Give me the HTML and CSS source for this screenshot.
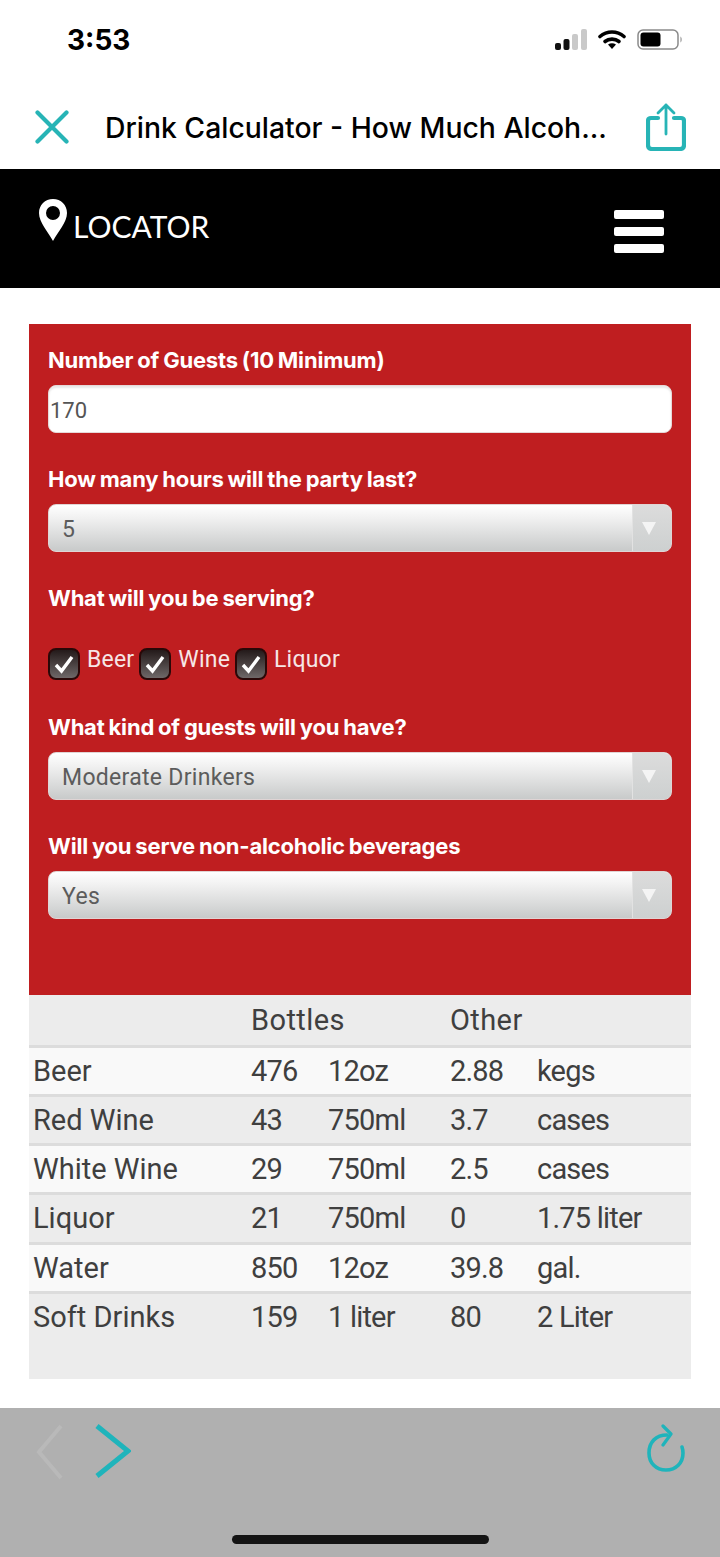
FILE: index.html
```html
<!DOCTYPE html>
<html lang="en">

<head>
    <meta charset="UTF-8">
    <meta name="viewport" content="width=device-width, initial-scale=1.0">
    <title>Drink Calculator</title>
    <link rel="stylesheet" href="styles.css">
</head>

<body>
    <div class="status-bar">
        <span class="time">3:53</span>
        <div class="status-icons">
            <svg class="signal" width="32" height="21" viewBox="0 0 32 21">
                <rect x="0" y="14" width="6" height="7" rx="2" fill="#111" />
                <rect x="8.500" y="10" width="6" height="11" rx="2" fill="#111" />
                <rect x="17" y="5" width="6" height="16" rx="2" fill="#c9c9c9" />
                <rect x="26" y="0" width="6" height="21" rx="2" fill="#c9c9c9" />
            </svg>
            <svg class="wifi" width="28" height="20" viewBox="0 0 28 20">
                <path d="M2 7.500 C9 1.500 19 1.500 26 7.500" fill="none" stroke="#000" stroke-width="3.600" stroke-linecap="round" />
                <path d="M7 12.500 C11 9.300 17 9.300 21 12.500" fill="none" stroke="#000" stroke-width="3.600" stroke-linecap="round" />
                <path d="M10 15.500 L14 20 L18 15.500 C15.500 13.800 12.500 13.800 10 15.500 Z" fill="#000" />
            </svg>
            <svg class="battery" width="45" height="21" viewBox="0 0 45 21">
                <rect x="1" y="1" width="40" height="19" rx="5" fill="#fff" stroke="#8a8a8a" stroke-width="1.500" />
                <rect x="3.500" y="3.500" width="20" height="14" rx="3" fill="#000" />
                <path d="M43.500 7.500 C45 8.500 45 12.500 43.500 13.500 Z" fill="#8a8a8a" />
            </svg>
        </div>
    </div>

    <div class="nav-bar">
        <svg class="close-icon" width="34" height="34" viewBox="0 0 34 34">
            <path d="M2.500 2.500 L31.500 31.500 M31.500 2.500 L2.500 31.500" fill="none" stroke="#27b4b6" stroke-width="4.200" stroke-linecap="round" />
        </svg>
        <span class="page-title">Drink Calculator - How Much Alcoh...</span>
        <svg class="share-icon" width="40" height="48" viewBox="0 0 40 48">
            <path d="M12 15 H5 Q2 15 2 18 V42 Q2 46 6 46 H34 Q38 46 38 42 V18 Q38 15 35 15 H28" fill="none" stroke="#27b4b6" stroke-width="4.200" stroke-linecap="round" />
            <path d="M20 31 V2 M12 10 L20 2 L28 10" fill="none" stroke="#27b4b6" stroke-width="2.800" stroke-linecap="round" stroke-linejoin="round" />
        </svg>
    </div>

    <header class="site-header">
        <div class="locator">
            <svg class="pin" width="28" height="42" viewBox="0 0 28 42">
                <path fill-rule="evenodd" d="M14 0 C6 0 0 6 0 14 C0 23 9 33 14 42 C19 33 28 23 28 14 C28 6 22 0 14 0 Z M14 7 A7 7 0 1 1 14 21 A7 7 0 1 1 14 7 Z" fill="#fff" />
            </svg>
            <span class="locator-text">LOCATOR</span>
        </div>
        <div class="hamburger">
            <span></span>
            <span></span>
            <span></span>
        </div>
    </header>

    <main class="content">
        <form class="calc-form">
            <label class="field-label">Number of Guests (10 Minimum)</label>
            <input class="text-input" type="text" value="170">

            <label class="field-label">How many hours will the party last?</label>
            <div class="select-wrap">
                <select class="select-input">
                    <option>5</option>
                </select>
                <span class="select-arrow"></span>
            </div>

            <label class="field-label">What will you be serving?</label>
            <div class="checks">
                <span class="check"><svg width="22" height="22" viewBox="0 0 22 22"><path d="M3 12 L8.500 18 L19 4" /></svg></span>
                <span class="check-text">Beer</span>
                <span class="check"><svg width="22" height="22" viewBox="0 0 22 22"><path d="M3 12 L8.500 18 L19 4" /></svg></span>
                <span class="check-text">Wine</span>
                <span class="check"><svg width="22" height="22" viewBox="0 0 22 22"><path d="M3 12 L8.500 18 L19 4" /></svg></span>
                <span class="check-text">Liquor</span>
            </div>

            <label class="field-label">What kind of guests will you have?</label>
            <div class="select-wrap">
                <select class="select-input">
                    <option>Moderate Drinkers</option>
                </select>
                <span class="select-arrow"></span>
            </div>

            <label class="field-label">Will you serve non-alcoholic beverages</label>
            <div class="select-wrap">
                <select class="select-input">
                    <option>Yes</option>
                </select>
                <span class="select-arrow"></span>
            </div>
        </form>

        <div class="results">
            <table>
                <colgroup>
                    <col class="col-name">
                    <col class="col-count">
                    <col class="col-unit">
                    <col class="col-other">
                    <col>
                </colgroup>
                <thead>
                    <tr>
                        <th></th>
                        <th colspan="2">Bottles</th>
                        <th colspan="2">Other</th>
                    </tr>
                </thead>
                <tbody>
                    <tr><td>Beer</td><td>476</td><td>12oz</td><td>2.88</td><td>kegs</td></tr>
                    <tr><td>Red Wine</td><td>43</td><td>750ml</td><td>3.7</td><td>cases</td></tr>
                    <tr><td>White Wine</td><td>29</td><td>750ml</td><td>2.5</td><td>cases</td></tr>
                    <tr><td>Liquor</td><td>21</td><td>750ml</td><td>0</td><td>1.75 liter</td></tr>
                    <tr><td>Water</td><td>850</td><td>12oz</td><td>39.8</td><td>gal.</td></tr>
                    <tr><td>Soft Drinks</td><td>159</td><td>1 liter</td><td>80</td><td>2 Liter</td></tr>
                </tbody>
            </table>
        </div>
    </main>

    <div class="toolbar">
        <div class="toolbar-icons">
            <svg class="back-icon" width="27" height="56" viewBox="0 0 27 56">
                <path d="M25 2 L3 28 L25 54" fill="none" stroke="#b9b9b9" stroke-width="4" />
            </svg>
            <svg class="forward-icon" width="36" height="54" viewBox="0 0 36 54">
                <path d="M2 2 L33 27 L2 52" fill="none" stroke="#1fb4bb" stroke-width="5" />
            </svg>
            <svg class="reload-icon" width="40" height="48" viewBox="0 0 40 48">
                <path d="M21 11 C10 11 3 18 3 29 C3 39 10 46 20 46 C30 46 37 39 37 29 C37 26 36.500 24.500 36 23" fill="none" stroke="#1fb4bb" stroke-width="3.600" stroke-linecap="round" />
                <path d="M17 2 L25 10 L17 21" fill="none" stroke="#1fb4bb" stroke-width="3.200" stroke-linecap="round" stroke-linejoin="round" />
            </svg>
        </div>
        <div class="home-bar"></div>
    </div>
</body>

</html>
```

FILE: styles.css
```css
* {
    box-sizing: border-box;
}

body {
    font-family: 'Roboto', sans-serif;
    background-color: #ffffff;
    margin: 0;
    padding: 0;
    color: #333;
    overflow: hidden;
}

.status-bar {
    height: 85px;
    display: flex;
    justify-content: space-between;
    align-items: flex-start;
    padding: 29px 38px 0 67px;
}

.time {
    font-family: 'Inter', sans-serif;
    font-size: 28px;
    font-weight: 700;
    line-height: 21px;
    color: #000;
    margin-top: 1px;
}

.status-icons {
    display: flex;
    align-items: flex-start;
    gap: 11px;
}

.nav-bar {
    height: 84px;
    display: flex;
    align-items: center;
    padding: 0 34px 0 35px;
}

.close-icon {
    flex: none;
}

.page-title {
    font-family: 'Inter', sans-serif;
    font-size: 28.350px;
    font-weight: 500;
    color: #000;
    margin: 2px 0 0 36px;
    white-space: nowrap;
    flex: 1;
}

.share-icon {
    flex: none;
}

.site-header {
    height: 119px;
    background-color: #000;
    display: flex;
    justify-content: space-between;
    align-items: center;
    padding: 0 56px 0 39px;
}

.locator {
    display: flex;
    align-items: flex-start;
    gap: 6px;
    margin-bottom: 17px;
}

.locator-text {
    font-family: 'Lato', sans-serif;
    font-size: 30px;
    line-height: 32px;
    color: #fff;
    margin-top: 11px;
}

.hamburger {
    width: 50px;
    display: flex;
    flex-direction: column;
    gap: 8px;
    margin-top: 5px;
}

.hamburger span {
    height: 9px;
    background-color: #fff;
    border-radius: 2px;
}

.content {
    padding: 36px 29px 0;
}

.calc-form {
    height: 671px;
    background-color: #bf1e20;
    padding: 21px 19px 0;
}

.field-label {
    display: block;
    height: 30px;
    line-height: 30px;
    font-family: 'Inter', sans-serif;
    font-size: 22px;
    font-weight: 700;
    color: #fff;
    letter-spacing: -0.2px;
    word-spacing: -1px;
    margin-bottom: 10px;
}

.text-input {
    display: block;
    width: 100%;
    height: 48px;
    margin-bottom: 31px;
    padding: 2px 0 0 1px;
    border: 1px solid #e6d8d8;
    border-radius: 8px;
    background-color: #fff;
    box-shadow: inset 0 2px 2px #e8e8e8;
    font-family: 'Roboto', sans-serif;
    font-size: 22px;
    color: #555;
}

.select-wrap {
    position: relative;
    height: 48px;
    margin-bottom: 31px;
}

.select-input {
    display: block;
    width: 100%;
    height: 48px;
    appearance: none;
    -webkit-appearance: none;
    padding: 2px 0 0 13px;
    border: 1px solid #e0d4d4;
    border-radius: 8px;
    background: linear-gradient(to bottom, #ffffff, #f0f0f0 30%, #c8caca);
    font-family: 'Roboto', sans-serif;
    font-size: 23px;
    letter-spacing: 0.3px;
    color: #5c5c5c;
}

.select-arrow {
    position: absolute;
    top: 1px;
    right: 1px;
    bottom: 1px;
    width: 39px;
    background: linear-gradient(to bottom, #dcdcdc, #cdd0d0);
    border-left: 1px solid #e2e2e2;
    border-radius: 0 7px 7px 0;
}

.select-arrow::after {
    content: "";
    position: absolute;
    top: 17px;
    left: 9px;
    border-left: 7px solid transparent;
    border-right: 7px solid transparent;
    border-top: 13px solid #f4f4f4;
}

.checks {
    display: flex;
    align-items: center;
    height: 32px;
    margin-top: 35px;
    margin-bottom: 32px;
    color: #f6e6e6;
    font-size: 23px;
    letter-spacing: 0.2px;
}

.check {
    flex: none;
    width: 32px;
    height: 32px;
    display: flex;
    align-items: center;
    justify-content: center;
    background: linear-gradient(to bottom, #241a1a, #6e6868);
    border: 2px solid #2a0808;
    border-radius: 8px;
}

.check svg path {
    fill: none;
    stroke: #fff;
    stroke-width: 3.400;
}

.check-text {
    margin: -10px 5px 0 7px;
}

.results {
    height: 384px;
    background-color: #ececec;
}

table {
    width: 100%;
    table-layout: fixed;
    border-collapse: collapse;
    font-size: 29px;
    color: #3f3f3f;
}

.col-name {
    width: 218px;
}

.col-count {
    width: 77px;
}

.col-unit {
    width: 122px;
}

.col-other {
    width: 87px;
}

th {
    font-weight: 400;
    text-align: left;
    height: 51px;
    padding: 0 4px;
    border-bottom: 3px solid #dcdcdc;
    background-color: #ececec;
    letter-spacing: 0.4px;
}

td {
    height: 49px;
    padding: 0 4px;
    white-space: nowrap;
    border-bottom: 3px solid #dcdcdc;
}

td + td {
    letter-spacing: -0.8px;
}

tbody tr:nth-child(odd) td {
    background-color: #f9f9f9;
}

tbody tr:nth-child(even) td {
    background-color: #ececec;
}

tbody tr:nth-child(4) td {
    height: 50px;
}

tbody tr:last-child td {
    border-bottom: none;
}

.toolbar {
    margin-top: 29px;
    height: 150px;
    background-color: #b0b0b0;
    padding-top: 16px;
}

.toolbar-icons {
    display: flex;
    align-items: flex-start;
    padding: 0 34px 0 36px;
}

.forward-icon {
    margin-left: 32px;
}

.reload-icon {
    margin-left: auto;
}

.home-bar {
    width: 257px;
    height: 9px;
    margin: 55px auto 0;
    background-color: #141414;
    border-radius: 5px;
}
```
